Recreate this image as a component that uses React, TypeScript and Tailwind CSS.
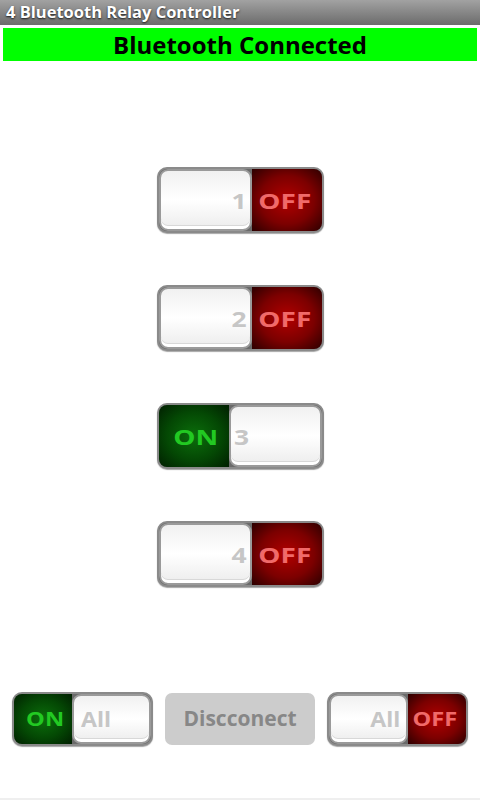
import React from 'react';

type SwitchProps = {
    label: string;
    on: boolean;
    size?: 'lg' | 'sm';
};

const font = "font-['Open_Sans','Roboto','Liberation_Sans',sans-serif]";

const Knob: React.FC<{ label: string; align: 'left' | 'right'; size: 'lg' | 'sm' }> = ({ label, align, size }) => (
    <div
        className={`flex items-center h-full rounded-[9px] border-2 border-[#9a9a9a] bg-gradient-to-b from-[#f1f1f1] via-white to-[#ececec] shadow-[inset_0_-3px_0_#ffffff,inset_0_-4px_0_#d8d8d8] ${
            size === 'lg' ? 'w-[93px]' : 'w-[79px]'
        } ${align === 'right' ? 'justify-end' : 'justify-start'} ${
            size === 'lg' ? (align === 'right' ? 'pr-[3px]' : 'pl-[3px]') : align === 'right' ? 'pr-[6px]' : 'pl-[7px]'
        }`}
    >
        <span
            className={`inline-block font-bold text-[#c6c6c6] leading-none ${
                size === 'lg' ? 'text-[22px] scale-x-[1.2]' : 'text-[21px] scale-x-[1.1]'
            } ${align === 'right' ? 'origin-right' : 'origin-left'}`}
        >
            {label}
        </span>
    </div>
);

const RelaySwitch: React.FC<SwitchProps> = ({ label, on, size = 'lg' }) => {
    const outer = size === 'lg' ? 'w-[167px] h-[66px]' : 'w-[141px] h-[54px]';
    const textSize = size === 'lg' ? 'text-[22px] scale-x-[1.27]' : 'text-[20px] scale-x-[1.18]';

    return (
        <div className={`flex ${outer} rounded-[10px] border-2 border-[#8a8a8a] bg-[#6a6a6a] overflow-hidden shadow-[0_1px_1px_rgba(0,0,0,0.35)] ${font}`}>
            {on ? (
                <>
                    <div className="flex flex-1 items-center justify-center pl-[4px] bg-[radial-gradient(ellipse_at_center,#0b6e0b_0%,#044804_55%,#011f01_100%)]">
                        <span className={`inline-block font-bold leading-none text-[#22c922] ${textSize}`}>ON</span>
                    </div>
                    <Knob label={label} align="left" size={size} />
                </>
            ) : (
                <>
                    <Knob label={label} align="right" size={size} />
                    <div className="flex flex-1 items-center justify-center pr-[5px] bg-[radial-gradient(ellipse_at_center,#b20000_0%,#7c0000_55%,#2c0000_100%)]">
                        <span className={`inline-block font-bold leading-none text-[#f06a6a] ${textSize}`}>OFF</span>
                    </div>
                </>
            )}
        </div>
    );
};

export default function App() {
    const relays = [
        { id: '1', on: false },
        { id: '2', on: false },
        { id: '3', on: true },
        { id: '4', on: false },
    ];

    return (
        <div className={`relative w-[480px] h-[800px] bg-white flex flex-col ${font}`}>
            <div className="h-[25px] flex items-center px-[6px] bg-gradient-to-b from-[#a2a2a2] to-[#6c6c6c]">
                <span className="text-white font-bold text-[16.5px] leading-none [text-shadow:0_1px_2px_rgba(0,0,0,0.8)]">
                    4 Bluetooth Relay Controller
                </span>
            </div>

            <div className="mx-[3px] mt-[3px] h-[33px] bg-[#00ff00] flex items-center justify-center">
                <span className="text-black font-bold text-[24px] leading-none">Bluetooth Connected</span>
            </div>

            <div className="mt-[106px] flex flex-col items-center gap-[52px] pl-[1px]">
                {relays.map(r => (
                    <RelaySwitch key={r.id} label={r.id} on={r.on} />
                ))}
            </div>

            <div className="mt-[105px] flex items-center gap-[12px] px-[12px]">
                <RelaySwitch label="All" on={true} size="sm" />
                <button className="w-[150px] h-[52px] rounded-[7px] bg-[#cccccc] text-[#878787] font-bold text-[21px]">
                    Discconect
                </button>
                <RelaySwitch label="All" on={false} size="sm" />
            </div>

            <div className="absolute bottom-0 left-0 w-full h-[2px] bg-[#efefef]" />
        </div>
    );
}
